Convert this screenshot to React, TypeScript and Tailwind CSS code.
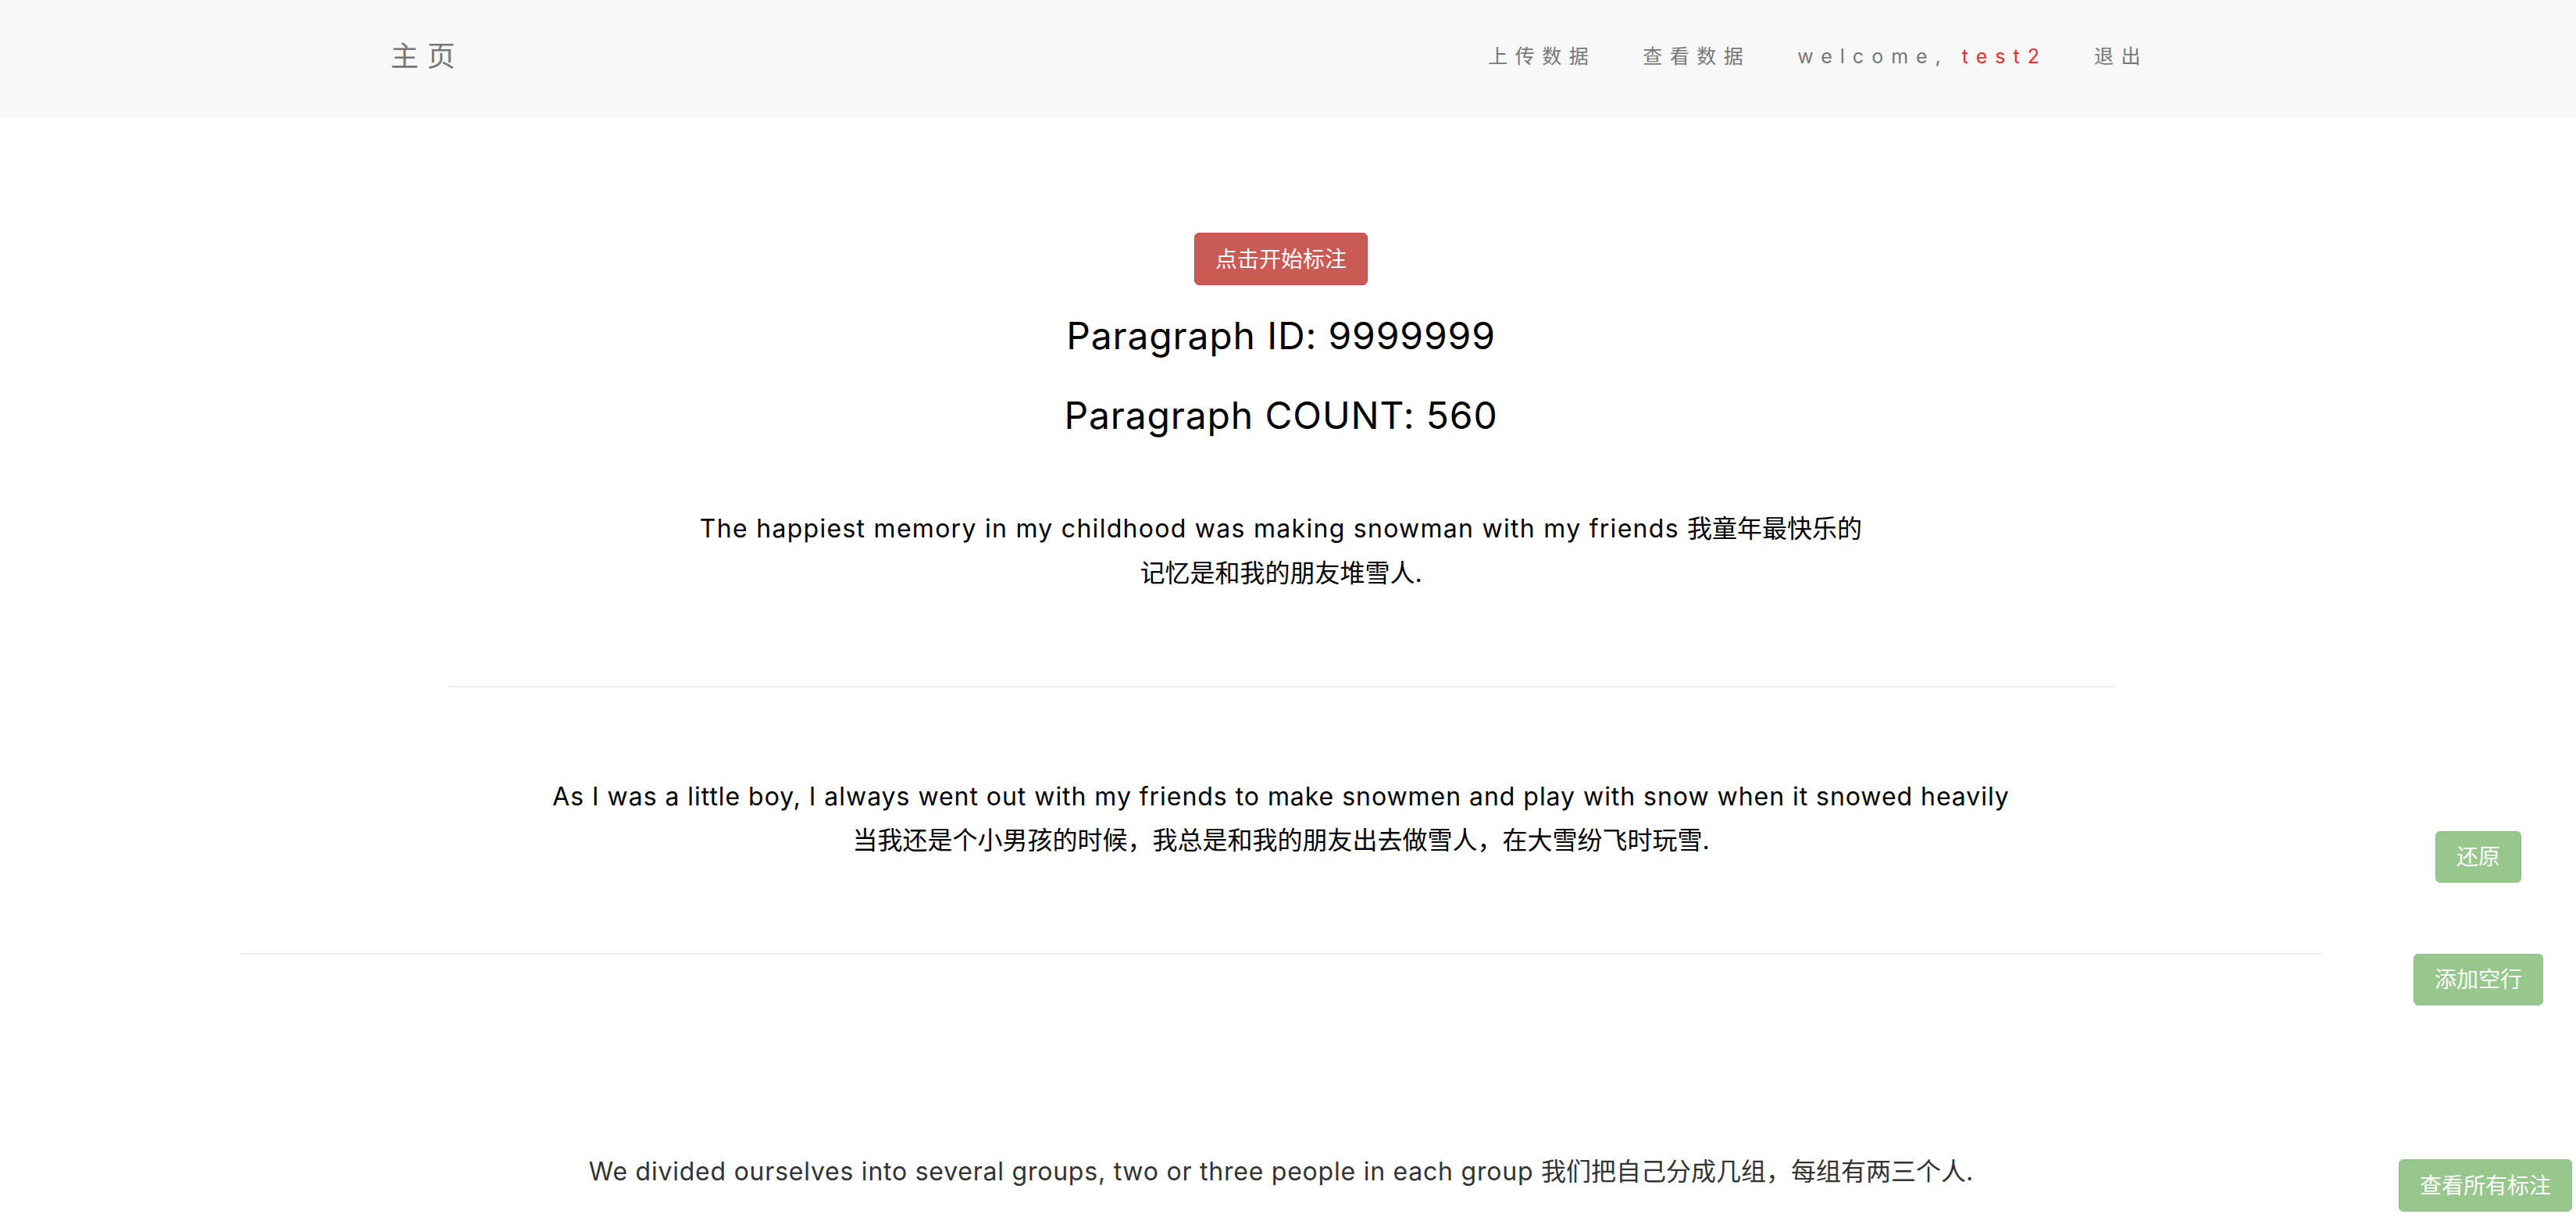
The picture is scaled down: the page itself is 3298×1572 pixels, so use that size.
import React from "react";

const FONT = { fontFamily: 'Inter, "Noto Sans CJK SC", sans-serif' };

export default function App() {
  return (
    <div className="relative min-h-[1572px] bg-white" style={FONT}>
      <nav className="h-[151px] bg-[#f8f8f8] flex items-center">
        <div className="w-full flex items-center justify-between pl-[500px] pr-[548px]">
          <a className="text-[36px] tracking-[0.3em] text-[#777777] leading-none -mt-[8px]">主页</a>
          <div className="flex items-center gap-[60px] text-[25px] tracking-[0.38em] text-[#777777] leading-none -mt-[7px]">
            <a>上传数据</a>
            <a>查看数据</a>
            <a className="tracking-[0.4em]">
              welcome, <span className="text-[#e8302a]">test2</span>
            </a>
            <a>退出</a>
          </div>
        </div>
      </nav>

      <main className="flex flex-col items-center pr-[18px] text-black">
        <button className="mt-[147px] h-[67px] px-[26px] rounded-[6px] bg-[#c95b54] border border-[#c14b45] text-white text-[28px] leading-none">
          点击开始标注
        </button>
        <h2 className="mt-[35px] h-[60px] leading-[60px] text-[48px] tracking-[0.018em] font-normal">
          Paragraph ID: 9999999
        </h2>
        <h2 className="mt-[42px] h-[60px] leading-[60px] text-[48px] tracking-[0.018em] font-normal">
          Paragraph COUNT: 560
        </h2>

        <section className="w-[2130px] flex flex-col items-center">
          <p className="mt-[86px] text-center text-[32px] leading-[57px]">
            <span className="tracking-[0.04em]">The happiest memory in my childhood was making snowman with my friends </span>
            我童年最快乐的
            <br />
            记忆是和我的朋友堆雪人.
          </p>
          <div className="mt-[116px] w-full h-[2px] bg-[#eeeeee]" />
        </section>

        <section className="w-[2664px] flex flex-col items-center">
          <p className="mt-[112px] text-center text-[32px] leading-[56px]">
            <span className="tracking-[0.03em]">As I was a little boy, I always went out with my friends to make snowmen and play with snow when it snowed heavily</span>
            <br />
            当我还是个小男孩的时候，我总是和我的朋友出去做雪人，在大雪纷飞时玩雪.
          </p>
          <div className="mt-[116px] w-full h-[2px] bg-[#eeeeee]" />
        </section>

        <section className="w-[2664px] flex flex-col items-center">
          <p className="mt-[250px] text-center text-[32px] leading-[56px] text-[#333333]">
            <span className="tracking-[0.024em]">We divided ourselves into several groups, two or three people in each group </span>
            我们把自己分成几组，每组有两三个人.
          </p>
        </section>
      </main>

      <button className="absolute top-[1064px] right-[70px] h-[66px] px-[26px] rounded-[6px] bg-[#97c78c] border border-[#8dbf82] text-white text-[28px] leading-none">
        还原
      </button>
      <button className="absolute top-[1221px] right-[42px] h-[66px] px-[26px] rounded-[6px] bg-[#97c78c] border border-[#8dbf82] text-white text-[28px] leading-none">
        添加空行
      </button>
      <button className="absolute top-[1484px] right-[5px] h-[67px] px-[26px] rounded-[6px] bg-[#97c78c] border border-[#8dbf82] text-white text-[28px] leading-none">
        查看所有标注
      </button>
    </div>
  );
}
